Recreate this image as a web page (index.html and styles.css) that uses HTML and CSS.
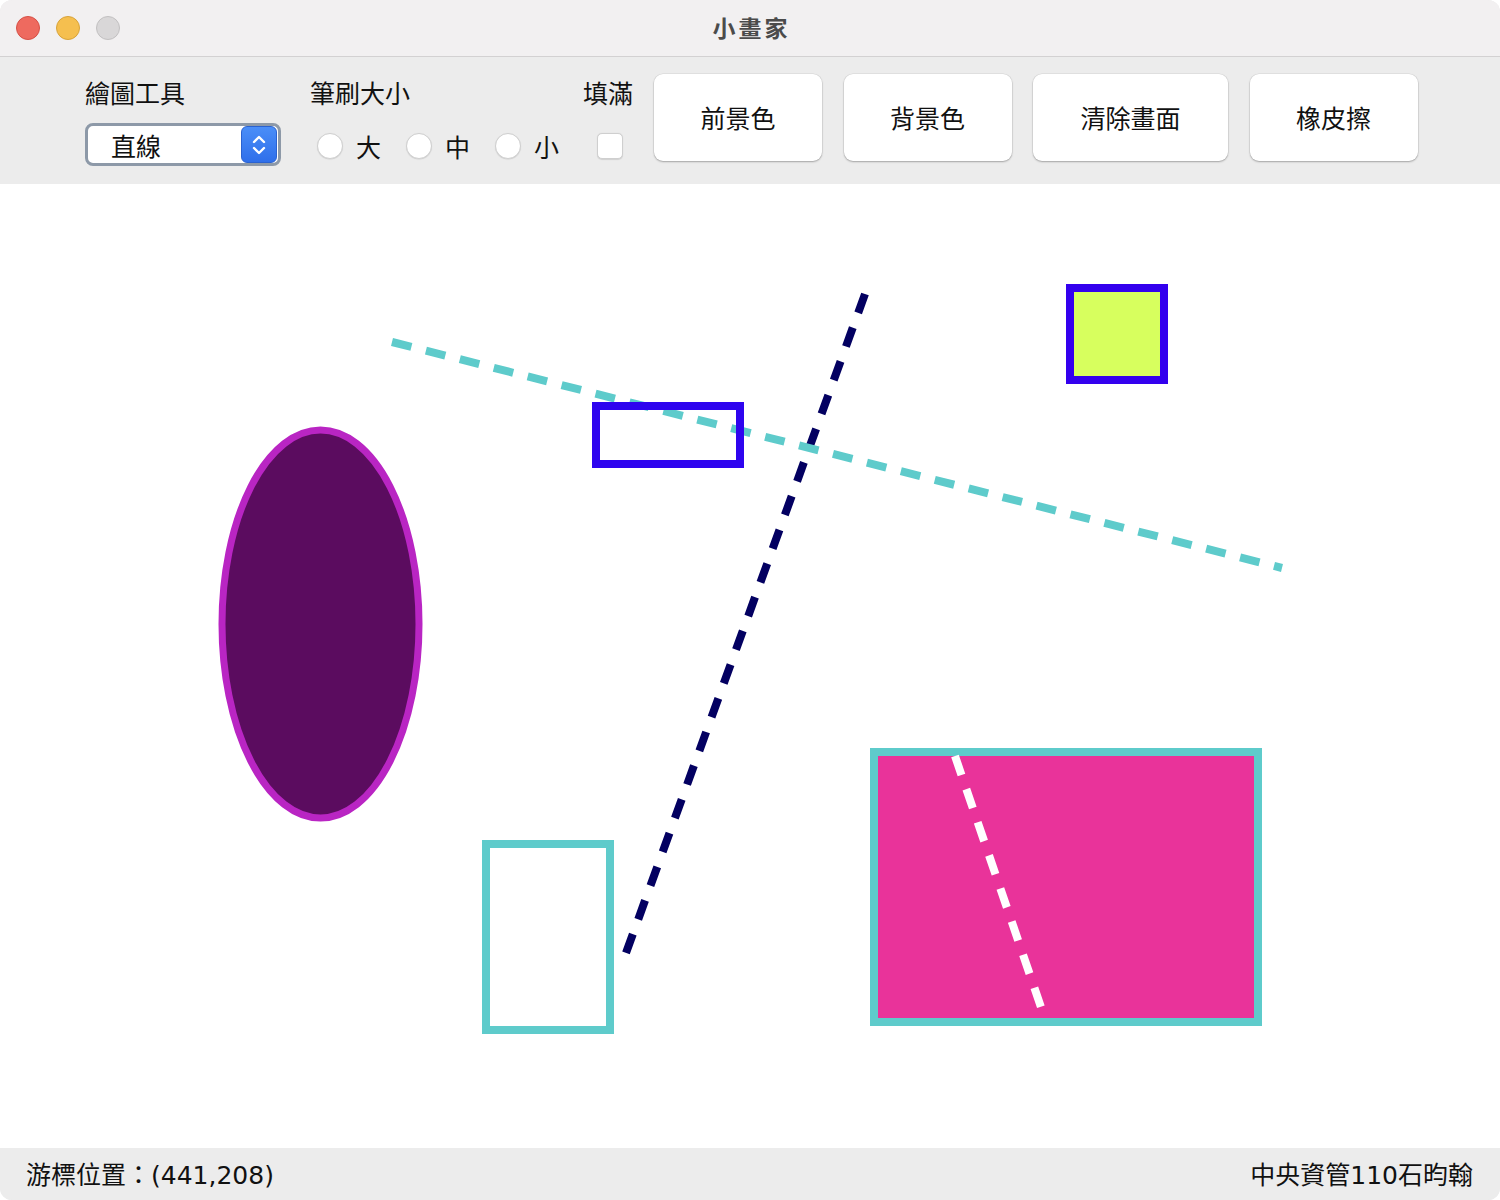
FILE: index.html
```html
<!DOCTYPE html>
<html lang="zh-Hant">
<head>
<meta charset="utf-8">
<title>小畫家</title>
<link rel="stylesheet" href="styles.css">
</head>
<body>
<div class="window">
  <header class="titlebar">
    <div class="lights">
      <span class="light red"></span>
      <span class="light yellow"></span>
      <span class="light gray"></span>
    </div>
    <div class="title">小畫家</div>
  </header>

  <section class="toolbar">
    <div class="group tool-group">
      <div class="label">繪圖工具</div>
      <div class="select">
        <span class="select-text">直線</span>
        <span class="stepper">
          <svg width="20" height="28" viewBox="0 0 20 28">
            <path d="M5 11 L10 6 L15 11" fill="none" stroke="#fff" stroke-width="2.4" stroke-linecap="round" stroke-linejoin="round"/>
            <path d="M5 17 L10 22 L15 17" fill="none" stroke="#fff" stroke-width="2.4" stroke-linecap="round" stroke-linejoin="round"/>
          </svg>
        </span>
      </div>
    </div>

    <div class="group brush-group">
      <div class="label">筆刷大小</div>
      <div class="radios">
        <span class="radio-item"><span class="radio"></span><span class="radio-label">大</span></span>
        <span class="radio-item"><span class="radio"></span><span class="radio-label">中</span></span>
        <span class="radio-item"><span class="radio"></span><span class="radio-label">小</span></span>
      </div>
    </div>

    <div class="group fill-group">
      <div class="label">填滿</div>
      <div class="checkbox-row"><span class="checkbox"></span></div>
    </div>

    <div class="buttons">
      <button class="btn">前景色</button>
      <button class="btn">背景色</button>
      <button class="btn btn-wide">清除畫面</button>
      <button class="btn">橡皮擦</button>
    </div>
  </section>

  <main class="canvas">
    <svg class="drawing" width="1500" height="964" viewBox="0 184 1500 964">
      <line x1="865" y1="294" x2="626" y2="953" stroke="#030061" stroke-width="8" stroke-dasharray="20 15.84"/>
      <line x1="392" y1="342" x2="1282" y2="568" stroke="#5ecbcb" stroke-width="8" stroke-dasharray="20 15"/>
      <rect x="596" y="406" width="144" height="58" fill="none" stroke="#2e04ef" stroke-width="8"/>
      <rect x="1070" y="288" width="94" height="92" fill="#d7ff5e" stroke="#3300ee" stroke-width="8"/>
      <ellipse cx="320.5" cy="624" rx="98.5" ry="194" fill="#5b0c5f" stroke="#b925c3" stroke-width="7"/>
      <rect x="486" y="844" width="124" height="186" fill="none" stroke="#5ecbcb" stroke-width="8"/>
      <rect x="874" y="752" width="384" height="270" fill="#e9339a" stroke="#5ecbcb" stroke-width="8"/>
      <line x1="955" y1="756" x2="1043" y2="1013" stroke="#ffffff" stroke-width="8" stroke-dasharray="20 15"/>
    </svg>
  </main>

  <footer class="statusbar">
    <span class="status-left">游標位置：<span class="num">(441,208)</span></span>
    <span class="status-right">中央資管<span class="num">110</span>石昀翰</span>
  </footer>
</div>
</body>
</html>
```

FILE: styles.css
```css
* { box-sizing: border-box; }

html, body {
  margin: 0;
  padding: 0;
  background: #ffffff;
}

body {
  font-family: "Noto Sans CJK TC", "Noto Sans", "Liberation Sans", sans-serif;
  color: #111;
}

.window {
  width: 1500px;
  height: 1200px;
  display: flex;
  flex-direction: column;
  border-radius: 12px;
  overflow: hidden;
  background: #ececec;
}

.titlebar {
  height: 57px;
  flex: 0 0 57px;
  background: #f2f0f1;
  border-bottom: 1px solid #d3d1d2;
  position: relative;
  display: flex;
  align-items: center;
  justify-content: center;
}

.lights {
  position: absolute;
  left: 16px;
  top: 16px;
  display: flex;
  gap: 16px;
}

.light {
  width: 24px;
  height: 24px;
  border-radius: 50%;
  display: block;
}
.light.red { background: #ee6a5f; border: 1px solid #d65046; }
.light.yellow { background: #f5bf4f; border: 1px solid #d8a33a; }
.light.gray { background: #d9d7d8; border: 1px solid #c2c0c1; }

.title {
  font-size: 23px;
  font-weight: 700;
  color: #4b4b4b;
  letter-spacing: 3px;
  margin-left: 3px;
  margin-top: -3px;
}

.toolbar {
  height: 127px;
  flex: 0 0 127px;
  background: #ececec;
  display: flex;
  align-items: flex-start;
  padding-left: 85px;
}

.group {
  margin-top: 20px;
  display: flex;
  flex-direction: column;
}

.label {
  font-size: 25px;
  line-height: 30px;
  height: 30px;
  white-space: nowrap;
}

.tool-group { width: 196px; margin-right: 29px; }

.select {
  margin-top: 16px;
  height: 43px;
  width: 196px;
  background: #fff;
  border: 3px solid #8d99a8;
  border-radius: 8px;
  display: flex;
  align-items: center;
  justify-content: space-between;
  padding-left: 23px;
  padding-right: 1px;
}

.select-text {
  font-size: 25px;
  line-height: 30px;
}

.stepper {
  width: 36px;
  height: 37px;
  border-radius: 6px;
  background: linear-gradient(#4a8ef8, #2f6fea);
  border: 1px solid #2a62d0;
  display: flex;
  align-items: center;
  justify-content: center;
}

.brush-group { width: 251px; margin-right: 22px; }

.radios {
  margin-top: 24px;
  display: flex;
  padding-left: 7px;
  gap: 25px;
}

.radio-item {
  display: flex;
  align-items: center;
  gap: 13px;
}

.radio {
  width: 26px;
  height: 26px;
  border-radius: 50%;
  background: #fff;
  border: 1px solid #cfcfcf;
  box-shadow: 0 0.5px 1px rgba(0,0,0,0.12);
  display: block;
}

.radio-label {
  font-size: 25px;
  line-height: 30px;
}

.fill-group { width: 50px; margin-right: 21px; }

.checkbox-row {
  margin-top: 26px;
  padding-left: 14px;
}

.checkbox {
  display: block;
  width: 26px;
  height: 26px;
  background: #fff;
  border: 1px solid #cfcfcf;
  border-radius: 5px;
  box-shadow: 0 0.5px 1px rgba(0,0,0,0.12);
}

.buttons {
  margin-top: 17px;
  display: flex;
  gap: 21.5px;
}

.btn {
  width: 168px;
  height: 87px;
  background: #fff;
  border: none;
  border-radius: 9px;
  box-shadow: 0 1px 2px rgba(0,0,0,0.28), 0 0 0 0.5px rgba(0,0,0,0.08);
  font-family: "Noto Sans CJK TC", "Noto Sans", sans-serif;
  font-size: 25px;
  color: #111;
  padding: 0;
  padding-bottom: 2px;
}

.btn-wide { width: 195px; }

.canvas {
  height: 964px;
  flex: 0 0 964px;
  background: #fff;
}

.drawing { display: block; }

.statusbar {
  flex: 1 1 auto;
  background: #ececec;
  display: flex;
  align-items: center;
  justify-content: space-between;
  padding: 0 27px 0 26px;
  font-size: 25px;
  line-height: 30px;
}

.num {
  font-family: "DejaVu Sans", "Noto Sans", sans-serif;
  font-size: 25px;
}
```
